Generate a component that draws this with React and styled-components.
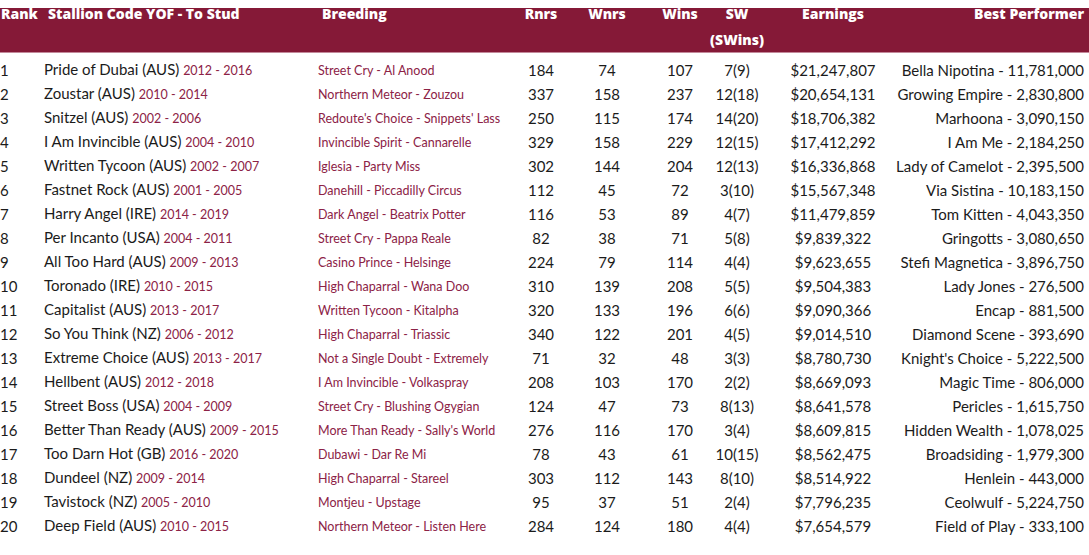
import React from 'react';
import styled, { createGlobalStyle } from 'styled-components';

const rows = [
  ['1', 'Pride of Dubai (AUS)', '2012 - 2016', 'Street Cry - Al Anood', '184', '74', '107', '7(9)', '$21,247,807', 'Bella Nipotina - 11,781,000'],
  ['2', 'Zoustar (AUS)', '2010 - 2014', 'Northern Meteor - Zouzou', '337', '158', '237', '12(18)', '$20,654,131', 'Growing Empire - 2,830,800'],
  ['3', 'Snitzel (AUS)', '2002 - 2006', "Redoute's Choice - Snippets' Lass", '250', '115', '174', '14(20)', '$18,706,382', 'Marhoona - 3,090,150'],
  ['4', 'I Am Invincible (AUS)', '2004 - 2010', 'Invincible Spirit - Cannarelle', '329', '158', '229', '12(15)', '$17,412,292', 'I Am Me - 2,184,250'],
  ['5', 'Written Tycoon (AUS)', '2002 - 2007', 'Iglesia - Party Miss', '302', '144', '204', '12(13)', '$16,336,868', 'Lady of Camelot - 2,395,500'],
  ['6', 'Fastnet Rock (AUS)', '2001 - 2005', 'Danehill - Piccadilly Circus', '112', '45', '72', '3(10)', '$15,567,348', 'Via Sistina - 10,183,150'],
  ['7', 'Harry Angel (IRE)', '2014 - 2019', 'Dark Angel - Beatrix Potter', '116', '53', '89', '4(7)', '$11,479,859', 'Tom Kitten - 4,043,350'],
  ['8', 'Per Incanto (USA)', '2004 - 2011', 'Street Cry - Pappa Reale', '82', '38', '71', '5(8)', '$9,839,322', 'Gringotts - 3,080,650'],
  ['9', 'All Too Hard (AUS)', '2009 - 2013', 'Casino Prince - Helsinge', '224', '79', '114', '4(4)', '$9,623,655', 'Stefi Magnetica - 3,896,750'],
  ['10', 'Toronado (IRE)', '2010 - 2015', 'High Chaparral - Wana Doo', '310', '139', '208', '5(5)', '$9,504,383', 'Lady Jones - 276,500'],
  ['11', 'Capitalist (AUS)', '2013 - 2017', 'Written Tycoon - Kitalpha', '320', '133', '196', '6(6)', '$9,090,366', 'Encap - 881,500'],
  ['12', 'So You Think (NZ)', '2006 - 2012', 'High Chaparral - Triassic', '340', '122', '201', '4(5)', '$9,014,510', 'Diamond Scene - 393,690'],
  ['13', 'Extreme Choice (AUS)', '2013 - 2017', 'Not a Single Doubt - Extremely', '71', '32', '48', '3(3)', '$8,780,730', "Knight's Choice - 5,222,500"],
  ['14', 'Hellbent (AUS)', '2012 - 2018', 'I Am Invincible - Volkaspray', '208', '103', '170', '2(2)', '$8,669,093', 'Magic Time - 806,000'],
  ['15', 'Street Boss (USA)', '2004 - 2009', 'Street Cry - Blushing Ogygian', '124', '47', '73', '8(13)', '$8,641,578', 'Pericles - 1,615,750'],
  ['16', 'Better Than Ready (AUS)', '2009 - 2015', "More Than Ready - Sally's World", '276', '116', '170', '3(4)', '$8,609,815', 'Hidden Wealth - 1,078,025'],
  ['17', 'Too Darn Hot (GB)', '2016 - 2020', 'Dubawi - Dar Re Mi', '78', '43', '61', '10(15)', '$8,562,475', 'Broadsiding - 1,979,300'],
  ['18', 'Dundeel (NZ)', '2009 - 2014', 'High Chaparral - Stareel', '303', '112', '143', '8(10)', '$8,514,922', 'Henlein - 443,000'],
  ['19', 'Tavistock (NZ)', '2005 - 2010', 'Montjeu - Upstage', '95', '37', '51', '2(4)', '$7,796,235', 'Ceolwulf - 5,224,750'],
  ['20', 'Deep Field (AUS)', '2010 - 2015', 'Northern Meteor - Listen Here', '284', '124', '180', '4(4)', '$7,654,579', 'Field of Play - 333,100'],
];

const GlobalStyle = createGlobalStyle`
  html, body {
    margin: 0;
    padding: 0;
    background: #ffffff;
  }
  body {
    font-family: Lato, "Liberation Sans", sans-serif;
    color: #1b1b1b;
  }
`;

const columns = '44px 274px 192px 62px 70px 76px 38px 154px 174px';

function App() {
  return (
    <Page>
      <GlobalStyle />
      <HeadBand>
        <HeadRow>
          <HeadCell $align="left" $indent={1}>Rank</HeadCell>
          <HeadCell $align="left" $indent={4}>Stallion Code YOF - To Stud</HeadCell>
          <HeadCell $align="left" $indent={4}>Breeding</HeadCell>
          <HeadCell $align="center">Rnrs</HeadCell>
          <HeadCell $align="center">Wnrs</HeadCell>
          <HeadCell $align="center">Wins</HeadCell>
          <HeadCell $align="center">
            SW
            <br />
            (SWins)
          </HeadCell>
          <HeadCell $align="center">Earnings</HeadCell>
          <HeadCell $align="right">Best Performer</HeadCell>
        </HeadRow>
      </HeadBand>
      <Body>
        {rows.map((r) => (
          <Row key={r[0]}>
            <Cell $align="left">{r[0]}</Cell>
            <Cell $align="left">
              <span>
                {r[1]} <Sub>{r[2]}</Sub>
              </span>
            </Cell>
            <Cell $align="left">
              <span>
                <Sub>{r[3]}</Sub>
              </span>
            </Cell>
            <Cell $align="center">{r[4]}</Cell>
            <Cell $align="center">{r[5]}</Cell>
            <Cell $align="center">{r[6]}</Cell>
            <Cell $align="center">{r[7]}</Cell>
            <Cell $align="center">{r[8]}</Cell>
            <Cell $align="right">{r[9]}</Cell>
          </Row>
        ))}
      </Body>
    </Page>
  );
}

export default App;

const Page = styled.div`
  width: 1089px;
  height: 555px;
  overflow: hidden;
  padding-top: 8px;
  box-sizing: border-box;
`;

const HeadBand = styled.div`
  display: flow-root;
  height: 45px;
  background: #851937;
  border-bottom: 1px solid #c3899a;
  box-sizing: border-box;
`;

const HeadRow = styled.div`
  display: grid;
  grid-template-columns: ${columns};
  margin-top: -7px;
`;

const alignMap = { left: 'flex-start', center: 'center', right: 'flex-end' };

const HeadCell = styled.div`
  display: flex;
  justify-content: ${(p) => alignMap[p.$align]};
  text-align: center;
  padding-left: ${(p) => p.$indent || 0}px;
  font-family: "Open Sans", Lato, sans-serif;
  font-size: 14px;
  font-weight: 800;
  line-height: 26px;
  color: #ffffff;
  white-space: nowrap;
`;

const Body = styled.div`
  padding-top: 4px;
`;

const Row = styled.div`
  display: grid;
  grid-template-columns: ${columns};
  height: 24px;
  align-items: center;
`;

const Cell = styled.div`
  display: flex;
  justify-content: ${(p) => alignMap[p.$align]};
  font-size: 15px;
  line-height: 24px;
  white-space: nowrap;
`;

const Sub = styled.span`
  font-size: 12.5px;
  color: #8c2246;
`;
